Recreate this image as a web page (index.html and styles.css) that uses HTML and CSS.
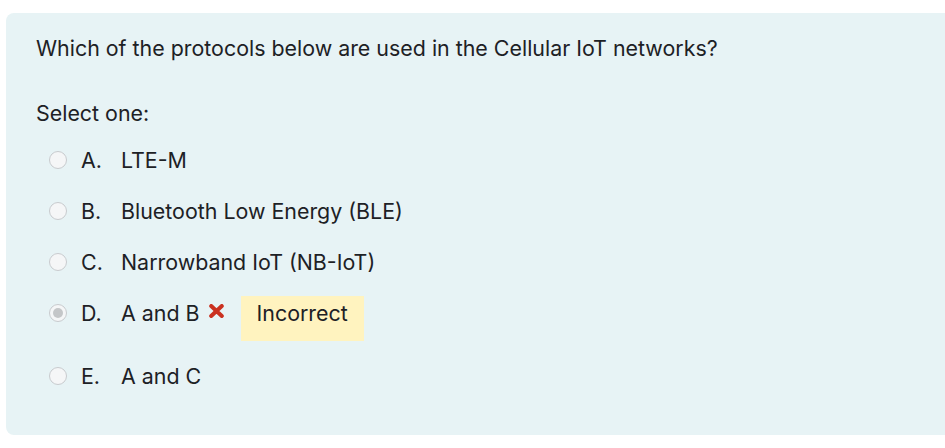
FILE: index.html
```html
<!DOCTYPE html>
<html lang="en">
<head>
<meta charset="utf-8">
<title>Question</title>
<link rel="stylesheet" href="styles.css">
</head>
<body>
<div class="que">
  <p class="qtext">Which of the protocols below are used in the Cellular IoT networks?</p>
  <p class="prompt">Select one:</p>
  <div class="answers">
    <div class="opt"><span class="radio"></span><span class="num">A.</span><span class="lbl">LTE-M</span></div>
    <div class="opt"><span class="radio"></span><span class="num">B.</span><span class="lbl">Bluetooth Low Energy (BLE)</span></div>
    <div class="opt"><span class="radio"></span><span class="num">C.</span><span class="lbl">Narrowband IoT (NB-IoT)</span></div>
    <div class="opt opt-sel"><span class="radio checked"></span><span class="num">D.</span><span class="lbl">A and B</span>
      <svg class="xmark" viewBox="0 0 15 14" width="15" height="14"><path d="M2.2 2 L12.8 12 M12.8 2 L2.2 12" stroke="#ca3120" stroke-width="4" stroke-linecap="round" fill="none"/></svg>
      <span class="badge">Incorrect</span>
    </div>
    <div class="opt"><span class="radio"></span><span class="num">E.</span><span class="lbl">A and C</span></div>
  </div>
</div>
</body>
</html>
```

FILE: styles.css
```css
html, body {
  margin: 0;
  padding: 0;
  background: #ffffff;
}
body {
  font-family: Inter, "Liberation Sans", sans-serif;
  color: #1d2125;
  font-size: 21.4px;
}
.que {
  margin: 13px 0 0 6px;
  height: 422px;
  background: #e7f3f5;
  border-radius: 8px 0 0 8px;
  padding: 0 0 0 30px;
  box-sizing: border-box;
  overflow: hidden;
}
.qtext {
  margin: 0;
  padding-top: 20px;
  line-height: 30px;
}
.prompt {
  margin: 35px 0 0 0;
  line-height: 30px;
}
.answers {
  margin-top: 6px;
  display: flex;
  flex-direction: column;
}
.opt {
  display: flex;
  align-items: center;
  height: 51px;
}
.opt-sel {
  height: 63px;
  align-items: flex-start;
}
.opt-sel .radio {
  margin-top: 17px;
}
.opt-sel .xmark {
  margin-top: 17px;
}
.opt-sel .num, .opt-sel .lbl {
  margin-top: 15px;
}
.radio {
  width: 16px;
  height: 16px;
  border: 1px solid #c8cbce;
  border-radius: 50%;
  background: #f5f6f7;
  margin-left: 13px;
  flex: none;
  position: relative;
  box-sizing: content-box;
}
.radio.checked::after {
  content: "";
  position: absolute;
  left: 3px;
  top: 3px;
  width: 10px;
  height: 10px;
  border-radius: 50%;
  background: #c4c6c8;
}
.num {
  margin-left: 14px;
  width: 40px;
  line-height: 22px;
}
.lbl {
  line-height: 22px;
}
.xmark {
  margin-left: 9px;
  flex: none;
}
.badge {
  margin: 9px 0 0 17px;
  background: #fff3bf;
  padding: 6px 16px 17px;
  line-height: 22px;
}
```
